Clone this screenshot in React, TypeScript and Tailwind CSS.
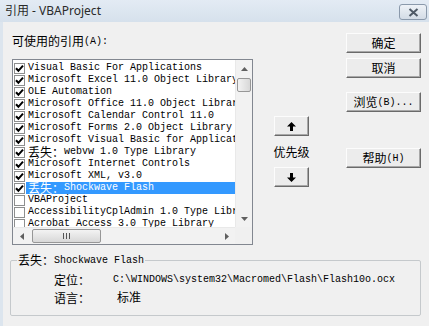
import React from "react";

const refs = [
  { label: "Visual Basic For Applications", checked: true },
  { label: "Microsoft Excel 11.0 Object Library", checked: true },
  { label: "OLE Automation", checked: true },
  { label: "Microsoft Office 11.0 Object Library", checked: true },
  { label: "Microsoft Calendar Control 11.0", checked: true },
  { label: "Microsoft Forms 2.0 Object Library", checked: true },
  { label: "Microsoft Visual Basic for Applications Extensibility", checked: true },
  { label: "webvw 1.0 Type Library", checked: true, missing: true },
  { label: "Microsoft Internet Controls", checked: true },
  { label: "Microsoft XML, v3.0", checked: true },
  { label: "Shockwave Flash", checked: true, missing: true, selected: true },
  { label: "VBAProject", checked: false },
  { label: "AccessibilityCplAdmin 1.0 Type Library", checked: false },
  { label: "Acrobat Access 3.0 Type Library", checked: false },
];

function Cjk({ children }: { children: React.ReactNode }) {
  return (
    <span className="font-['Noto_Sans_CJK_SC',sans-serif] text-[12px] leading-[12px] whitespace-nowrap">
      {children}
    </span>
  );
}

function WinButton({ children, className = "" }: { children: React.ReactNode; className?: string }) {
  return (
    <div
      className={
        "flex items-center justify-center bg-[#ececec] border border-t-[#fcfcfc] border-l-[#fcfcfc] border-r-[#6a6a6a] border-b-[#6a6a6a] shadow-[inset_-1px_-1px_0_#a8a8a8] text-black " +
        className
      }
    >
      {children}
    </div>
  );
}

function CheckBox({ checked }: { checked: boolean }) {
  return (
    <div className="w-[11px] h-[11px] shrink-0 border border-[#8e8f8f] bg-white flex items-center justify-center">
      {checked && (
        <svg width="9" height="9" viewBox="0 0 9 9">
          <path d="M1 4.2 L3.4 6.8 L8 1.6" fill="none" stroke="#000" strokeWidth="2" />
        </svg>
      )}
    </div>
  );
}

function ListBox() {
  return (
    <div className="w-[241px] h-[186px] border border-[#828790] bg-white flex flex-col overflow-hidden">
      <div className="flex h-[167px]">
        <div className="w-[222px] overflow-hidden pt-[2px]">
          {refs.map((r, i) => (
            <div key={i} className="flex items-center h-[12px] overflow-hidden">
              <div className="ml-[1px] mr-[1px]">
                <CheckBox checked={r.checked} />
              </div>
              <div
                className={
                  "flex-1 h-[12px] flex items-center whitespace-nowrap overflow-hidden pl-[2px] font-['Liberation_Mono',monospace] text-[10px] leading-[12px] " +
                  (r.selected ? "bg-[#3399ff] text-white" : "text-black")
                }
              >
                {r.missing && <Cjk>丢失：</Cjk>}
                {r.label}
              </div>
            </div>
          ))}
        </div>
        <div className="w-[17px] bg-[#f2f2f2] border-l border-[#e9e9e9] flex flex-col items-center">
          <div className="h-[17px] flex items-center justify-center">
            <svg width="7" height="4" viewBox="0 0 7 4">
              <path d="M0 4 L3.5 0 L7 4 Z" fill="#606060" />
            </svg>
          </div>
          <div className="mt-[1px] w-[14px] h-[14px] rounded-[2px] border border-[#979797] bg-gradient-to-r from-[#f3f3f3] to-[#d8d8d8]" />
          <div className="flex-1" />
          <div className="h-[17px] flex items-center justify-center">
            <svg width="7" height="4" viewBox="0 0 7 4">
              <path d="M0 0 L3.5 4 L7 0 Z" fill="#606060" />
            </svg>
          </div>
        </div>
      </div>
      <div className="flex h-[17px]">
        <div className="w-[222px] bg-[#f2f2f2] border-t border-[#e9e9e9] flex items-center">
          <div className="w-[17px] flex items-center justify-center">
            <svg width="4" height="7" viewBox="0 0 4 7">
              <path d="M4 0 L0 3.5 L4 7 Z" fill="#606060" />
            </svg>
          </div>
          <div className="ml-[2px] w-[69px] h-[14px] rounded-[2px] border border-[#979797] bg-gradient-to-b from-[#f3f3f3] to-[#d8d8d8] flex items-center justify-center gap-[2px]">
            <div className="w-px h-[6px] bg-[#555]" />
            <div className="w-px h-[6px] bg-[#555]" />
            <div className="w-px h-[6px] bg-[#555]" />
          </div>
          <div className="flex-1" />
          <div className="w-[17px] flex items-center justify-center">
            <svg width="4" height="7" viewBox="0 0 4 7">
              <path d="M0 0 L4 3.5 L0 7 Z" fill="#606060" />
            </svg>
          </div>
        </div>
        <div className="w-[17px] bg-[#f0f0f0]" />
      </div>
    </div>
  );
}

function Arrow({ up }: { up: boolean }) {
  return (
    <svg width="9" height="9" viewBox="0 0 9 9">
      {up ? (
        <path d="M4.5 0 L9 4.5 L6 4.5 L6 9 L3 9 L3 4.5 L0 4.5 Z" fill="#000" />
      ) : (
        <path d="M4.5 9 L9 4.5 L6 4.5 L6 0 L3 0 L3 4.5 L0 4.5 Z" fill="#000" />
      )}
    </svg>
  );
}

export default function App() {
  return (
    <div className="w-[429px] h-[326px] overflow-hidden bg-[#f0f0f0] flex flex-col text-black">
      <div className="h-[22px] shrink-0 bg-gradient-to-b from-[#e3ebf4] to-[#d6e1ec] flex items-center pl-[5px] pr-[2px]">
        <span className="font-['Noto_Sans','Noto_Sans_CJK_SC',sans-serif] text-[12px] text-[#2a2a2a]">
          引用 - VBAProject
        </span>
        <div className="flex-1" />
        <div className="w-[28px] h-[16px] mt-[2px] rounded-[3px] border border-[#8a99ab] bg-gradient-to-b from-[#eef2f7] to-[#d3dce6] flex items-center justify-center">
          <svg width="11" height="9" viewBox="0 0 11 9">
            <path d="M1.5 1 L9.5 8 M9.5 1 L1.5 8" stroke="#4e5966" strokeWidth="2" fill="none" />
          </svg>
        </div>
      </div>

      <div className="flex-1 flex flex-col border-l-[3px] border-[#dce5ee]">
        <div className="flex pt-[11px] pl-[9px]">
          <div className="w-[241px] flex flex-col">
            <div className="h-[16px] flex items-center">
              <Cjk>可使用的引用</Cjk>
              <span className="font-['Liberation_Mono',monospace] text-[10px]">(A):</span>
            </div>
            <div className="mt-[10px]">
              <ListBox />
            </div>
          </div>

          <div className="ml-[21px] w-[35px] flex flex-col items-center pt-[83px]">
            <WinButton className="w-[35px] h-[20px]">
              <Arrow up />
            </WinButton>
            <div className="h-[31px] flex items-center whitespace-nowrap">
              <Cjk>优先级</Cjk>
            </div>
            <WinButton className="w-[35px] h-[20px]">
              <Arrow up={false} />
            </WinButton>
          </div>

          <div className="ml-[37px] w-[75px] flex flex-col">
            <WinButton className="h-[20px]">
              <Cjk>确定</Cjk>
            </WinButton>
            <WinButton className="h-[20px] mt-[5px]">
              <Cjk>取消</Cjk>
            </WinButton>
            <WinButton className="h-[20px] mt-[14px]">
              <Cjk>浏览</Cjk>
              <span className="font-['Liberation_Mono',monospace] text-[10px]">(B)...</span>
            </WinButton>
            <WinButton className="h-[20px] mt-[36px]">
              <Cjk>帮助</Cjk>
              <span className="font-['Liberation_Mono',monospace] text-[10px]">(H)</span>
            </WinButton>
          </div>
        </div>

        <fieldset className="mt-[8px] ml-[7px] w-[411px] h-[63px] border border-[#c5c9cc] rounded-[2px] px-[6px]">
          <legend className="px-[1px] flex items-center h-[14px]">
            <Cjk>丢失：</Cjk>
            <span className="font-['Liberation_Mono',monospace] text-[10px]">Shockwave Flash</span>
          </legend>
          <div className="pl-[37px] pt-[3px] flex flex-col">
            <div className="h-[18px] flex items-center">
              <div className="w-[59px]">
                <Cjk>定位：</Cjk>
              </div>
              <span className="font-['Liberation_Mono',monospace] text-[10px]">
                C:\WINDOWS\system32\Macromed\Flash\Flash10o.ocx
              </span>
            </div>
            <div className="h-[18px] flex items-center">
              <div className="w-[63px]">
                <Cjk>语言：</Cjk>
              </div>
              <Cjk>标准</Cjk>
            </div>
          </div>
        </fieldset>
      </div>
    </div>
  );
}
